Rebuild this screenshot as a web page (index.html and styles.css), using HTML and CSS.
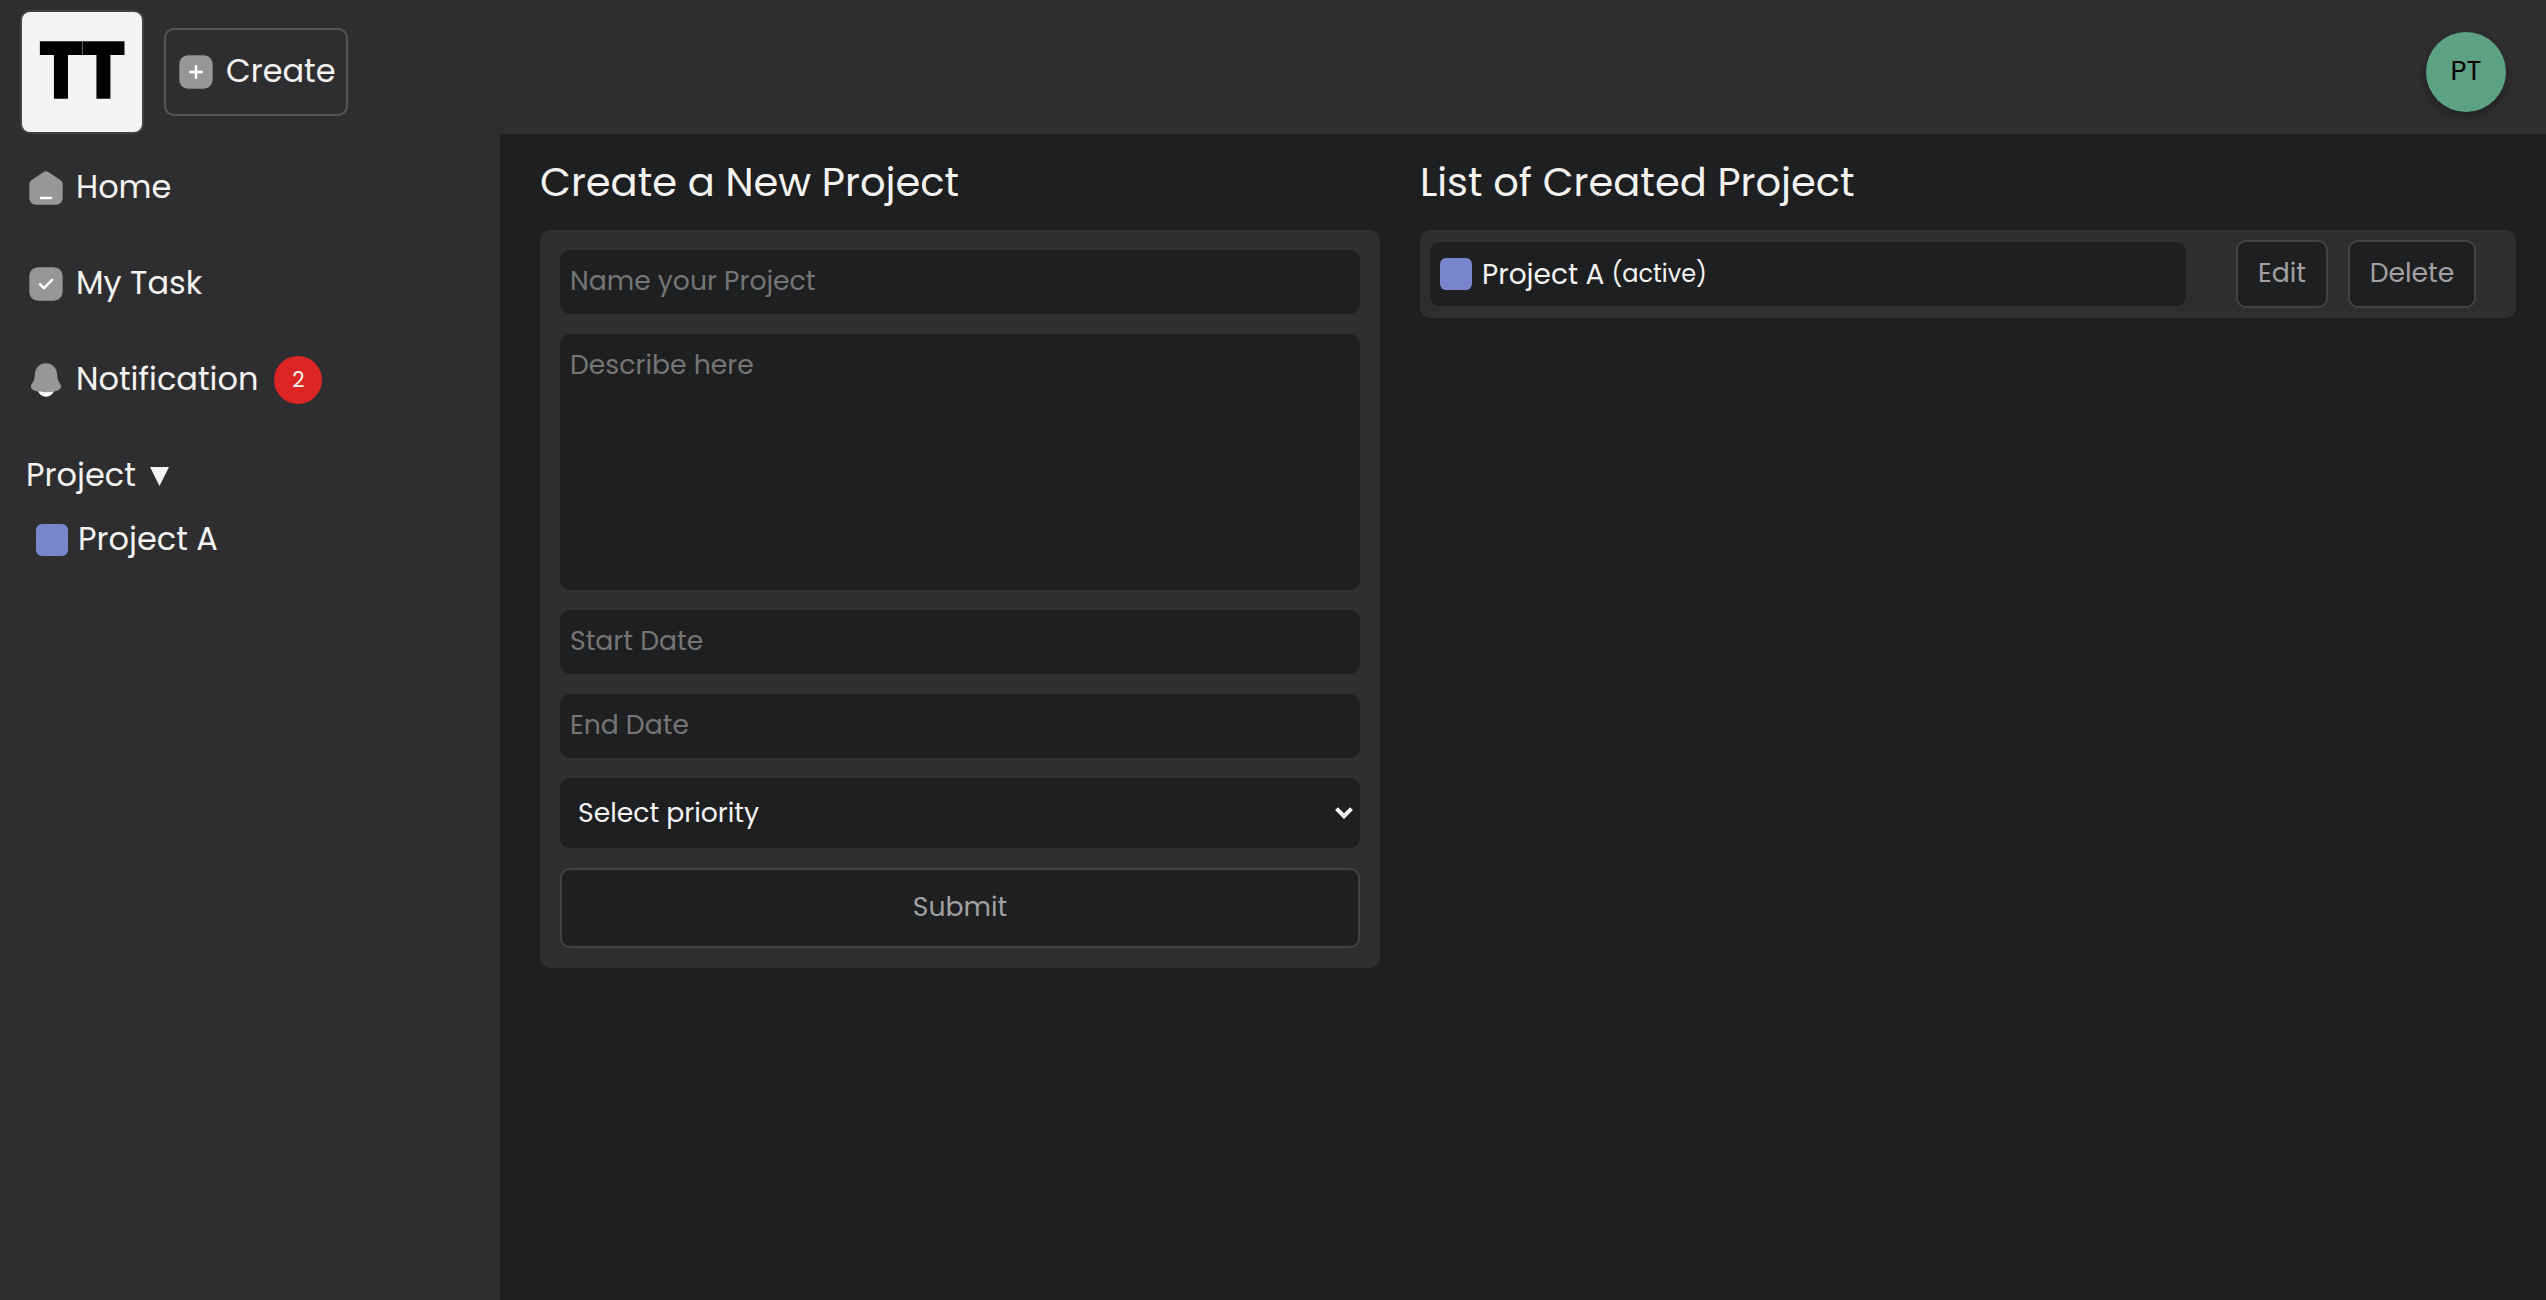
FILE: index.html
```html
<!DOCTYPE html>
<html lang="en">
<head>
<meta charset="utf-8">
<title>Create Project</title>
<link rel="stylesheet" href="styles.css">
</head>
<body>
<header class="topbar">
  <div class="logo"><span class="logo-text">TT</span></div>
  <button class="create" type="button">
    <svg class="icon" viewBox="0 0 24 24"><path fill="#979797" d="M16.19 2H7.81C4.17 2 2 4.17 2 7.81v8.37C2 19.83 4.17 22 7.81 22h8.37c3.64 0 5.81-2.17 5.81-5.81V7.81C22 4.17 19.83 2 16.19 2Z"/><path stroke="#fff" stroke-width="1.5" stroke-linecap="round" d="M8.500 12h7M12 8.500v7"/></svg>
    <span>Create</span>
  </button>
  <div class="avatar">PT</div>
</header>
<div class="body">
  <nav class="sidebar">
    <a class="nav-item">
      <svg class="icon" viewBox="0 0 24 24"><path fill="#979797" d="M10.4 2.5 3.6 7C2.5 7.7 2 8.6 2 9.900V17.500C2 20.400 3.600 22 6.500 22h11c2.900 0 4.500-1.600 4.500-4.500V9.900C22 8.600 21.500 7.700 20.400 7L13.600 2.500c-1-.7-2.200-.7-3.200 0Z"/><path stroke="#fff" stroke-width="1.500" stroke-linecap="round" d="M9 18h6"/></svg>
      <span>Home</span>
    </a>
    <a class="nav-item">
      <svg class="icon" viewBox="0 0 24 24"><path fill="#979797" d="M16.19 2H7.81C4.17 2 2 4.17 2 7.81v8.37C2 19.83 4.17 22 7.81 22h8.37c3.64 0 5.81-2.17 5.81-5.81V7.81C22 4.17 19.83 2 16.19 2Z"/><path fill="none" stroke="#fff" stroke-width="1.500" stroke-linecap="round" stroke-linejoin="round" d="m8.500 12.200 2.200 2.300 5-5"/></svg>
      <span>My Task</span>
    </a>
    <a class="nav-item">
      <svg class="icon" viewBox="0 0 24 24"><path fill="#fff" d="M7.200 18.500h9.600C16.100 20.600 14.200 22 12 22s-4.100-1.400-4.800-3.500Z"/><path fill="#979797" d="M12 2C8.300 2 5.500 4.900 5.300 8.700c-.1 2.300-.3 3.300-1.300 4.800-.7 1-1.100 1.700-1 2.600.1 1.300 1.100 2 2.700 2.500 1.800.5 4 .7 6.300.7s4.500-.2 6.300-.7c1.600-.5 2.600-1.200 2.700-2.500.1-.9-.3-1.600-1-2.600-1-1.500-1.200-2.500-1.300-4.800C18.500 4.900 15.700 2 12 2Z"/></svg>
      <span>Notification</span>
      <span class="badge">2</span>
    </a>
    <div class="nav-item nav-group"><span>Project</span><svg class="caret" viewBox="0 0 19 19"><path fill="#f5f4f3" d="M0 0h19L9.500 19Z"/></svg></div>
    <a class="nav-project"><i class="swatch"></i><span>Project A</span></a>
  </nav>
  <main class="content">
    <section class="create-col">
      <h1>Create a New Project</h1>
      <form class="card form">
        <input class="field" type="text" placeholder="Name your Project">
        <textarea class="field area" placeholder="Describe here"></textarea>
        <input class="field" type="text" placeholder="Start Date">
        <input class="field" type="text" placeholder="End Date">
        <div class="field select"><span>Select priority</span><svg class="chevron" viewBox="0 0 18 12"><path fill="none" stroke="#f5f4f3" stroke-width="4" d="M1.500 1.700 9 9.200l7.500-7.500"/></svg></div>
        <button class="btn submit" type="button">Submit</button>
      </form>
    </section>
    <section class="list-col">
      <h1>List of Created Project</h1>
      <div class="card row">
        <div class="project"><i class="swatch"></i><span class="name">Project A</span><span class="state">(active)</span></div>
        <button class="btn small edit" type="button">Edit</button>
        <button class="btn small delete" type="button">Delete</button>
      </div>
    </section>
  </main>
</div>
</body>
</html>
```
FILE: styles.css
```css
* { box-sizing: border-box; }

body {
  margin: 0;
  height: 1300px;
  display: flex;
  flex-direction: column;
  background: #1e1f21;
  color: #f5f4f3;
  font: 400 32px/48px Poppins, Inter, sans-serif;
  overflow: hidden;
}

button, input, textarea { font-family: inherit; }

.topbar {
  height: 134px;
  flex: none;
  display: flex;
  align-items: center;
  gap: 20px;
  padding: 10px 40px 0 20px;
  background: #2e2e30;
}

.logo {
  width: 124px;
  height: 124px;
  display: flex;
  align-items: center;
  justify-content: center;
  border: 2px solid #424244;
  border-radius: 10px;
  background: #f5f4f3;
  color: #000;
}

.logo-text {
  font: 900 77px/78px Inter, sans-serif;
  letter-spacing: -2px;
  margin-right: -2px;
  -webkit-text-stroke: 1.5px #000;
  transform: translate(-1.5px, -2px) scaleX(.84);
}

.create {
  width: 184px;
  height: 88px;
  display: flex;
  align-items: center;
  gap: 10px;
  padding: 0 10px;
  border: 2px solid #565551;
  border-radius: 10px;
  background: none;
  color: inherit;
  font-size: 32px;
  line-height: 48px;
}
.create span { padding-bottom: 2px; }

.icon { width: 40px; height: 40px; flex: none; display: block; }

.avatar {
  width: 80px;
  height: 80px;
  margin-left: auto;
  border-radius: 50%;
  background: #5da283;
  color: #000;
  font-size: 27.5px;
  line-height: 78px;
  text-align: center;
  box-shadow: 0 4px 10px rgba(0, 0, 0, .3);
}

.body { flex: 1; display: flex; min-height: 0; }

.sidebar { width: 500px; flex: none; padding: 6px 26px; background: #2e2e30; }

.nav-item { height: 96px; display: flex; align-items: center; gap: 10px; }
.nav-item span { padding-bottom: 2px; }
.nav-item .badge {
  width: 48px;
  height: 48px;
  margin-left: 6px;
  padding: 0;
  border-radius: 50%;
  background: #dd2525;
  font-size: 21.333px;
  line-height: 47px;
  text-align: center;
}
.nav-group { gap: 15px; }
.caret { width: 19px; height: 19px; display: block; margin-left: -0.5px; margin-top: 1px; }

.nav-project { display: flex; align-items: center; gap: 10px; padding: 0 10px; height: 48px; margin-top: -8px; }
.nav-project span { padding-bottom: 2px; }

.swatch { width: 32px; height: 32px; flex: none; border-radius: 6px; background: #7986cb; }

.content { flex: 1; display: flex; gap: 40px; padding: 18px 30px 0 40px; }
.create-col { width: 840px; flex: none; }
.list-col { flex: 1; }

h1 { margin: 0 0 18px; font-size: 40px; font-weight: 400; line-height: 60px; }

.card { border-radius: 10px; background: #2e2e30; }

.form { display: flex; flex-direction: column; gap: 20px; padding: 20px; }

.field {
  display: block;
  width: 100%;
  height: 64px;
  padding: 11px 10px 13px;
  border: 0;
  border-radius: 10px;
  background: #1e1f21;
  color: #f5f4f3;
  font-size: 26.667px;
}
.field::placeholder { color: #757575; }
.area { height: 256px; padding-top: 12px; line-height: 38px; resize: none; }

.select {
  height: 70px;
  display: flex;
  align-items: center;
  justify-content: space-between;
  padding: 0 7px 0 18px;
  line-height: 40px;
}
.chevron { width: 18px; height: 12px; display: block; margin-bottom: 1px; }

.btn {
  border: 2px solid #424244;
  border-radius: 10px;
  background: #1e1f21;
  color: #a2a0a2;
  font-size: 26.667px;
  line-height: 40px;
}
.submit { height: 80px; padding: 0 0 2px; }

.row { height: 88px; display: flex; align-items: center; gap: 20px; padding: 0 40px 0 10px; }
.project {
  flex: 1;
  height: 64px;
  display: flex;
  align-items: center;
  margin-right: 30px;
  padding: 0 10px;
  border-radius: 10px;
  background: #1e1f21;
  line-height: 40px;
}
.name { margin-left: 10px; padding-top: 1px; font-size: 28px; }
.state { margin-left: 7px; padding-bottom: 1px; font-size: 24px; }
.small { height: 68px; padding: 0 0 2px; }
.edit { width: 92px; }
.delete { width: 128px; }
```
